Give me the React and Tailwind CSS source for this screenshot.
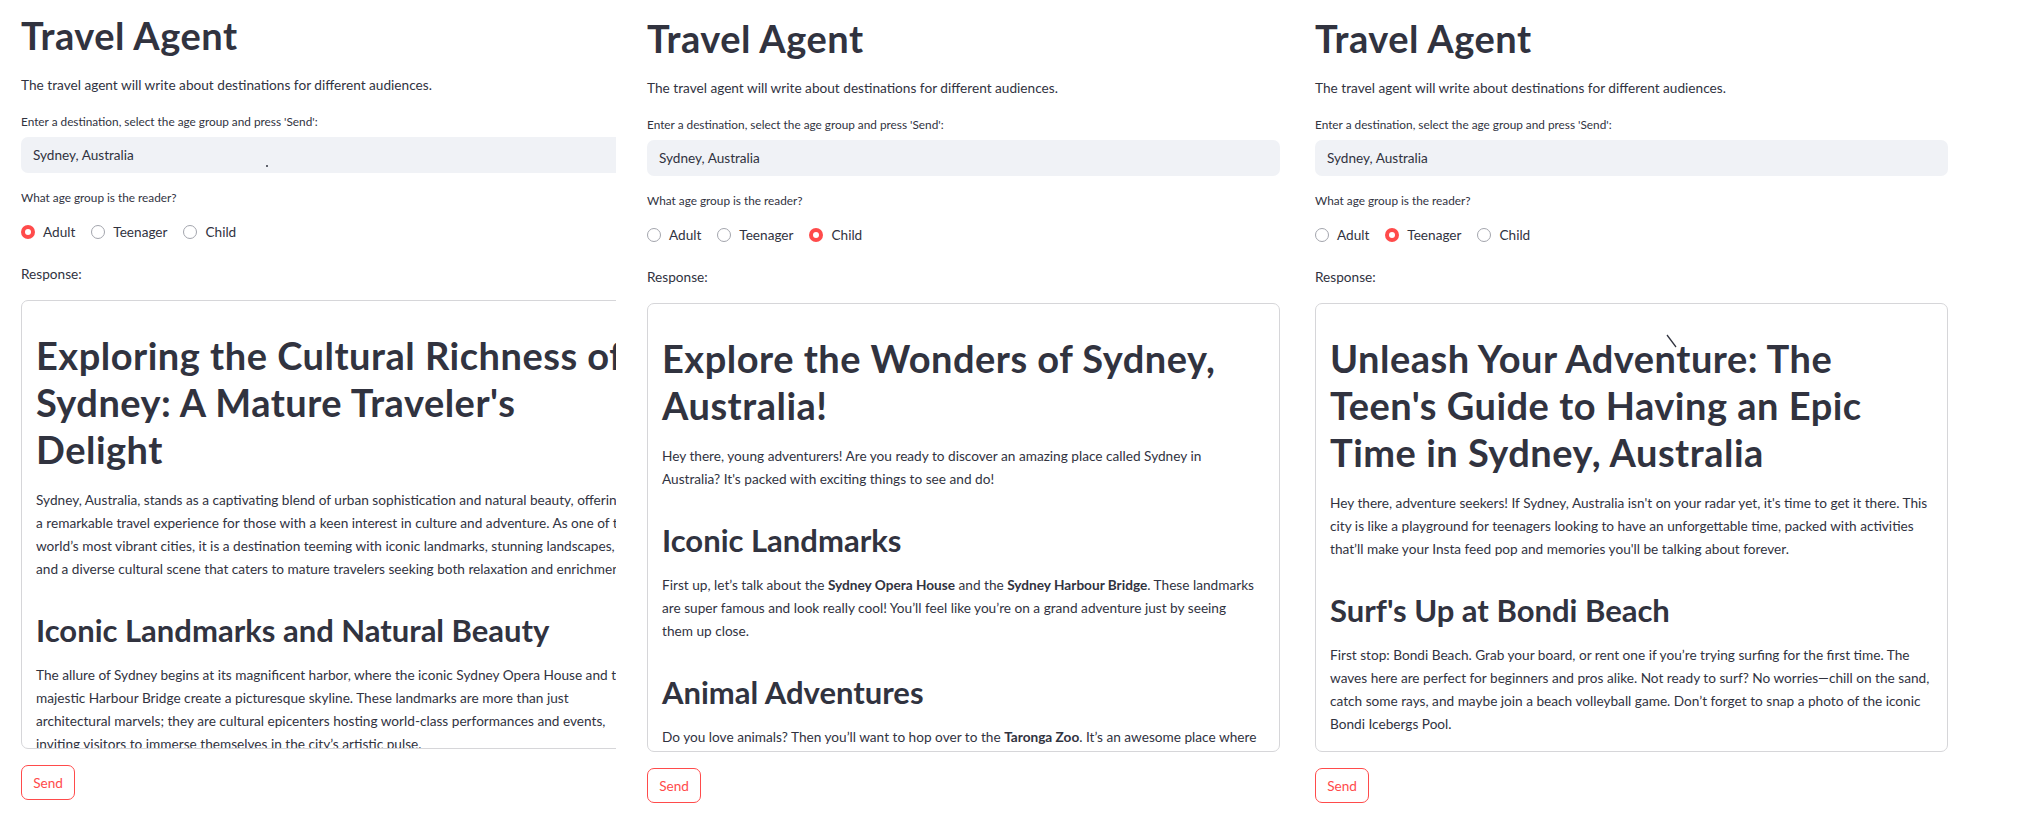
import React from 'react';

const ages = ['Adult', 'Teenager', 'Child'];

function Radio({ label, checked }) {
  return (
    <label className="flex items-center gap-[8px] mr-[16px]">
      {checked ? (
        <span className="w-[14px] h-[14px] rounded-full bg-[#ff4b4b] flex items-center justify-center">
          <span className="w-[6px] h-[6px] rounded-full bg-white" />
        </span>
      ) : (
        <span className="w-[14px] h-[14px] rounded-full border border-[#a3a5ad] bg-white" />
      )}
      <span className="text-[13.6px] leading-[22px]">{label}</span>
    </label>
  );
}

const H1 = ({ children }) => (
  <h1 className="pt-[17px] pb-[16px] text-[38px] leading-[47px] font-bold tracking-[0.5px]">{children}</h1>
);

const H2 = ({ children }) => (
  <h2 className="pt-[15px] pb-[15px] text-[31px] leading-[38px] font-bold">{children}</h2>
);

const P = ({ children }) => (
  <p className="mb-[15px] text-[13.65px] leading-[23px]">{children}</p>
);

function TravelAgent({ age, dot, children }) {
  return (
    <div className="w-[633px] shrink-0">
      <h1 className="text-[38px] leading-[46px] font-bold tracking-[0.5px]">Travel Agent</h1>
      <p className="mt-[16px] text-[13.65px] leading-[22.4px]">
        The travel agent will write about destinations for different audiences.
      </p>
      <p className="mt-[16.6px] text-[11.8px] leading-[18px]">
        Enter a destination, select the age group and press 'Send':
      </p>
      <div className="relative mt-[6px] h-[36px] rounded-[7px] bg-[#f0f2f6] px-[12px] flex items-center text-[13.6px]">
        Sydney, Australia
        {dot && <span className="absolute left-[245px] top-[28px] w-[2px] h-[2px] rounded-full bg-[#31333f]" />}
      </div>
      <p className="mt-[16px] text-[11.8px] leading-[18px]">What age group is the reader?</p>
      <div className="mt-[14px] h-[22px] flex items-center">
        {ages.map((a) => (
          <Radio key={a} label={a} checked={a === age} />
        ))}
      </div>
      <p className="mt-[20px] text-[13.65px] leading-[22.4px]">Response:</p>
      <div className="mt-[15px] h-[449px] overflow-hidden rounded-[7px] border border-[#d6d6d9] px-[14px] pt-[14px]">
        {children}
      </div>
      <button className="mt-[16px] w-[54px] h-[35px] rounded-[7px] border border-[#ff4b4b] text-[#ff4b4b] text-[13.6px] flex items-center justify-center bg-white">
        Send
      </button>
    </div>
  );
}

export default function App() {
  return (
    <div className="flex min-h-[816px] bg-white text-[#31333f] font-['Lato',sans-serif]">
      <div className="w-[616px] shrink-0 overflow-hidden pl-[21px] pt-[12px]">
        <TravelAgent age="Adult" dot>
          <H1>Exploring the Cultural Richness of Sydney: A Mature Traveler's Delight</H1>
          <P>
            Sydney, Australia, stands as a captivating blend of urban sophistication and natural beauty, offering
            <br />
            a remarkable travel experience for those with a keen interest in culture and adventure. As one of the
            world’s most vibrant cities, it is a destination teeming with iconic landmarks, stunning landscapes, and a
            diverse cultural scene that caters to mature travelers seeking both relaxation and enrichment.
          </P>
          <H2>Iconic Landmarks and Natural Beauty</H2>
          <P>
            The allure of Sydney begins at its magnificent harbor, where the iconic Sydney Opera House and the majestic
            Harbour Bridge create a picturesque skyline. These landmarks are more than just architectural marvels; they
            are cultural epicenters hosting world-class performances and events, inviting visitors to immerse
            themselves in the city’s artistic pulse.
          </P>
        </TravelAgent>
      </div>

      <div className="w-[668px] shrink-0 pl-[31px] pt-[15px]">
        <TravelAgent age="Child">
          <H1>Explore the Wonders of Sydney, Australia!</H1>
          <P>
            Hey there, young adventurers! Are you ready to discover an amazing place called Sydney in
            <br />
            Australia? It's packed with exciting things to see and do!
          </P>
          <H2>Iconic Landmarks</H2>
          <P>
            First up, let’s talk about the <strong className="font-bold">Sydney Opera House</strong> and the{' '}
            <strong className="font-bold">Sydney Harbour Bridge</strong>. These landmarks are super famous and look
            really cool! You’ll feel like you’re on a grand adventure just by seeing
            <br />
            them up close.
          </P>
          <H2>Animal Adventures</H2>
          <P>
            Do you love animals? Then you’ll want to hop over to the <strong className="font-bold">Taronga Zoo</strong>.
            It’s an awesome place where you can meet kangaroos, koalas and lots of other amazing animals.
          </P>
        </TravelAgent>
      </div>

      <div className="relative w-[747px] shrink-0 pl-[31px] pt-[15px]">
        <TravelAgent age="Teenager">
          <H1>Unleash Your Adventure: The Teen's Guide to Having an Epic Time in Sydney, Australia</H1>
          <P>
            Hey there, adventure seekers! If Sydney, Australia isn't on your radar yet, it's time to get it there. This
            city is like a playground for teenagers looking to have an unforgettable time, packed with activities
            that’ll make your Insta feed pop and memories you'll be talking about forever.
          </P>
          <H2>Surf's Up at Bondi Beach</H2>
          <P>
            First stop: Bondi Beach. Grab your board, or rent one if you’re trying surfing for the first time. The
            waves here are perfect for beginners and pros alike. Not ready to surf? No worries—chill on the sand, catch
            some rays, and maybe join a beach volleyball game. Don’t forget to snap a photo of the iconic Bondi
            Icebergs Pool.
          </P>
        </TravelAgent>
        <svg className="absolute left-[382px] top-[334px] w-[12px] h-[14px]" viewBox="0 0 12 14">
          <line x1="1" y1="1" x2="10" y2="13" stroke="#31333f" strokeWidth="1.3" />
        </svg>
      </div>
    </div>
  );
}
